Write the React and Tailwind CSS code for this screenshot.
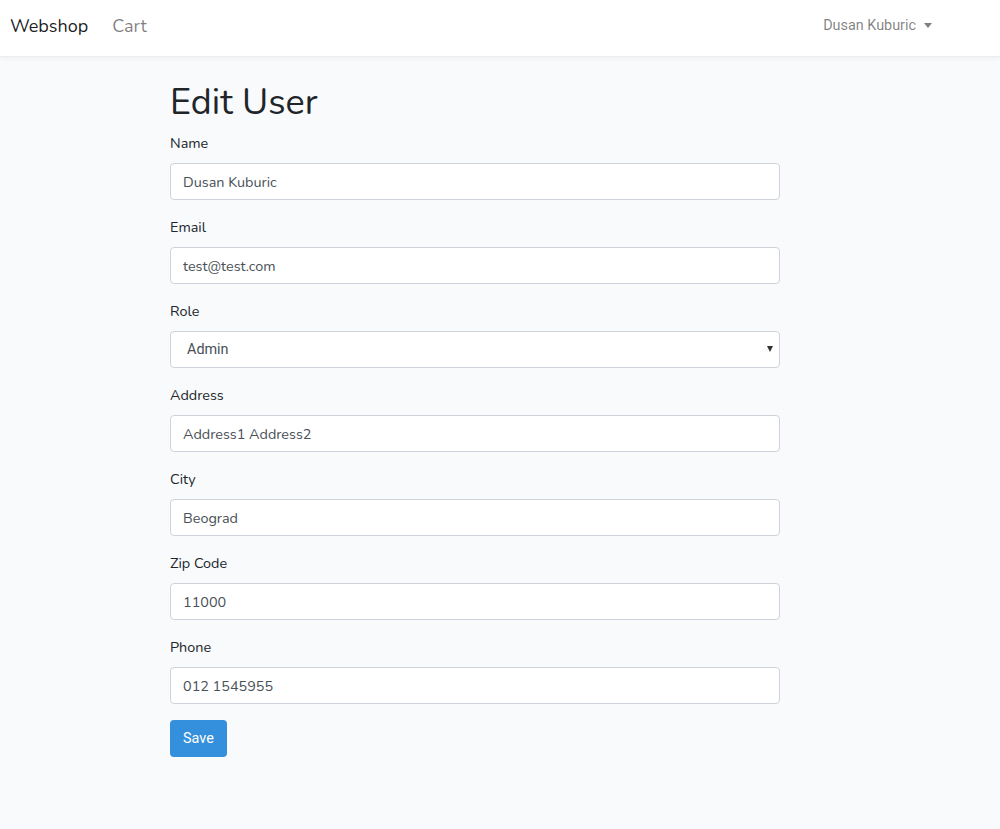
import React, { useState } from 'react';

const fields = [
  { id: 'name', label: 'Name', value: 'Dusan Kuburic' },
  { id: 'email', label: 'Email', value: 'test@test.com' },
  { id: 'role', label: 'Role', value: 'Admin', select: true },
  { id: 'address', label: 'Address', value: 'Address1 Address2' },
  { id: 'city', label: 'City', value: 'Beograd' },
  { id: 'zip', label: 'Zip Code', value: '11000' },
  { id: 'phone', label: 'Phone', value: '012 1545955' },
];

const App = () => {
  const [form, setForm] = useState(
    Object.fromEntries(fields.map((f) => [f.id, f.value]))
  );

  const update = (id) => (e) => setForm({ ...form, [id]: e.target.value });

  return (
    <div className="min-h-[829px] bg-[#f8fafc] text-[#212529] font-['Nunito','Noto_Sans',sans-serif]">
      {/* Navbar */}
      <nav className="h-[57px] bg-white shadow-[0_2px_4px_rgba(0,0,0,0.04)] border-b border-[#eceef0] flex items-center px-[10px] pb-[4px]">
        <a className="text-[18px] text-black/90 mr-[24px]">Webshop</a>
        <a className="text-[18px] text-black/50">Cart</a>
        <div className="ml-auto mr-[58px] flex items-center gap-[8px] text-[14.4px] text-black/50 font-['Roboto',sans-serif]">
          Dusan Kuburic
          <span className="w-0 h-0 border-x-[4.5px] border-x-transparent border-t-[5px] border-t-black/50" />
        </div>
      </nav>

      {/* Form */}
      <div className="w-[610px] ml-[170px] pt-[24px]">
        <h1 className="text-[36px] leading-[1.2] mb-[8px]">Edit User</h1>
        {fields.map((f) => (
          <div key={f.id} className="mb-[16px]">
            <label className="block text-[14.4px] leading-[23px] mb-[8px]">{f.label}</label>
            {f.select ? (
              <div className="relative">
                <select
                  value={form[f.id]}
                  onChange={update(f.id)}
                  className="appearance-none w-full h-[37px] bg-white border border-[#ced4da] rounded-[4px] pl-[16px] text-[14.4px] text-[#495057] font-['Roboto',sans-serif] outline-none"
                >
                  <option>Admin</option>
                  <option>User</option>
                </select>
                <span className="absolute right-[7px] top-[15px] w-0 h-0 border-x-[3.5px] border-x-transparent border-t-[6px] border-t-[#333]" />
              </div>
            ) : (
              <input
                value={form[f.id]}
                onChange={update(f.id)}
                className="w-full h-[37px] bg-white border border-[#ced4da] rounded-[4px] px-[12px] text-[14.4px] text-[#495057] outline-none"
              />
            )}
          </div>
        ))}
        <button className="h-[37px] px-[13px] bg-[#3490dc] text-white rounded-[4px] text-[14.4px] font-['Roboto',sans-serif]">
          Save
        </button>
      </div>
    </div>
  );
};

export default App;
